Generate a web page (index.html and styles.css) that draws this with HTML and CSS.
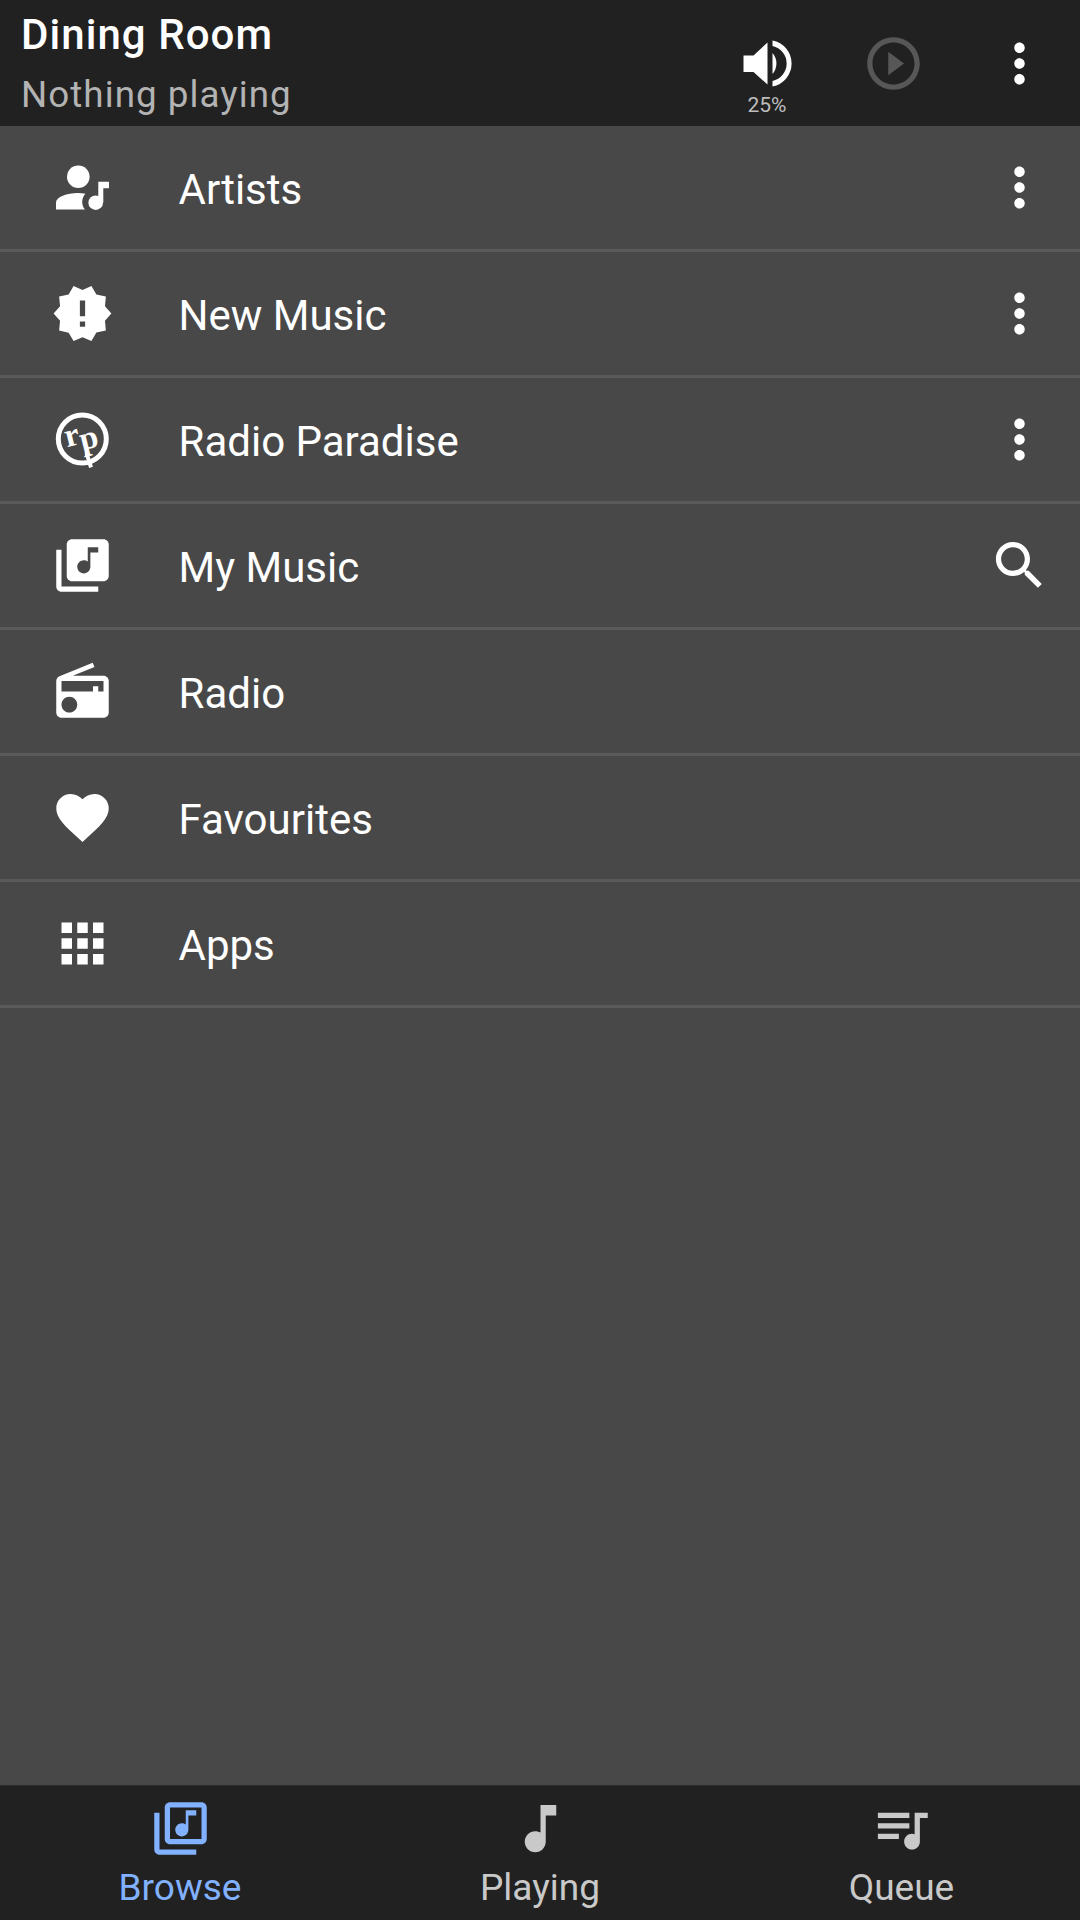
FILE: index.html
```html
<!DOCTYPE html>
<html lang="en">
<head>
    <meta charset="utf-8">
    <title>Dining Room</title>
    <link rel="stylesheet" href="styles.css">
</head>
<body>
    <header class="toolbar">
        <div class="now">
            <div class="now-title">Dining Room</div>
            <div class="now-sub">Nothing playing</div>
        </div>
        <div class="actions">
            <div class="volume">
                <svg class="icon" viewBox="0 0 63 63"><path d="M7.5 23.5H17.5L31.5 10.5V52.5L17.5 40H7.5Z"/><path d="M36.5 21A16 16 0 0 1 36.5 42Z"/><path d="M36.5 8.5A23.4 23.4 0 0 1 36.5 54.5V49A17.9 17.9 0 0 0 36.5 14Z"/></svg>
                <span class="volume-pct">25%</span>
            </div>
            <svg class="icon icon-off" viewBox="0 0 24 24"><path d="M10 16.5l6-4.5-6-4.5v9zM12 2C6.48 2 2 6.48 2 12s4.48 10 10 10 10-4.48 10-10S17.52 2 12 2zm0 18c-4.41 0-8-3.59-8-8s3.59-8 8-8 8 3.59 8 8-3.59 8-8 8z"/></svg>
            <svg class="icon" viewBox="0 0 24 24"><path d="M12 8c1.1 0 2-.9 2-2s-.9-2-2-2-2 .9-2 2 .9 2 2 2zm0 2c-1.1 0-2 .9-2 2s.9 2 2 2 2-.9 2-2-.9-2-2-2zm0 6c-1.1 0-2 .9-2 2s.9 2 2 2 2-.9 2-2-.9-2-2-2z"/></svg>
        </div>
    </header>

    <main class="list">
        <div class="row">
            <svg class="icon" viewBox="0 0 63 63"><g transform="translate(0 1.5)"><circle cx="27.3" cy="19.2" r="11.3"/><path d="M5 52V45C5 39.500 16 35.500 27 35.500C29.500 35.500 32 35.700 34.500 36.200C30.500 40 30 47.500 34 52Z"/><circle cx="44.700" cy="45.200" r="7.300"/><path d="M47.300 45V24.200H58V30.800H52.300V45Z"/></g></svg>
            <span class="row-label">Artists</span>
            <svg class="icon" viewBox="0 0 24 24"><path d="M12 8c1.1 0 2-.9 2-2s-.9-2-2-2-2 .9-2 2 .9 2 2 2zm0 2c-1.1 0-2 .9-2 2s.9 2 2 2 2-.9 2-2-.9-2-2-2zm0 6c-1.1 0-2 .9-2 2s.9 2 2 2 2-.9 2-2-.9-2-2-2z"/></svg>
        </div>
        <div class="row">
            <svg class="icon" viewBox="0 0 24 24"><path d="M23 12l-2.440-2.780.34-3.680-3.610-.82-1.890-3.180L12 3 8.600 1.540 6.710 4.720l-3.610.81.34 3.680L1 12l2.440 2.780-.34 3.690 3.610.82 1.890 3.180L12 21l3.400 1.460 1.890-3.180 3.610-.82-.34-3.680L23 12zm-10 5h-2v-2h2v2zm0-4h-2V7h2v6z"/></svg>
            <span class="row-label">New Music</span>
            <svg class="icon" viewBox="0 0 24 24"><path d="M12 8c1.1 0 2-.9 2-2s-.9-2-2-2-2 .9-2 2 .9 2 2 2zm0 2c-1.1 0-2 .9-2 2s.9 2 2 2 2-.9 2-2-.9-2-2-2zm0 6c-1.1 0-2 .9-2 2s.9 2 2 2 2-.9 2-2-.9-2-2-2z"/></svg>
        </div>
        <div class="row">
            <svg class="icon" viewBox="0 0 63 63"><circle class="rp-ring" cx="31.300" cy="31" r="24"/><path class="rp-tail" d="M35.500 45L40 59.300"/><text class="rp-text" x="14" y="38" transform="rotate(-14 20 30)">r</text><text class="rp-text" x="29" y="40" transform="rotate(-14 40 32)">p</text></svg>
            <span class="row-label">Radio Paradise</span>
            <svg class="icon" viewBox="0 0 24 24"><path d="M12 8c1.1 0 2-.9 2-2s-.9-2-2-2-2 .9-2 2 .9 2 2 2zm0 2c-1.1 0-2 .9-2 2s.9 2 2 2 2-.9 2-2-.9-2-2-2zm0 6c-1.1 0-2 .9-2 2s.9 2 2 2 2-.9 2-2-.9-2-2-2z"/></svg>
        </div>
        <div class="row">
            <svg class="icon" viewBox="0 0 24 24"><path d="M20 2H8c-1.100 0-2 .9-2 2v12c0 1.100.9 2 2 2h12c1.100 0 2-.9 2-2V4c0-1.100-.9-2-2-2zm-2 5h-3v5.500c0 1.380-1.120 2.500-2.500 2.500S10 13.880 10 12.500s1.120-2.500 2.500-2.500c.57 0 1.080.19 1.500.51V5h4v2zM4 6H2v14c0 1.100.9 2 2 2h14v-2H4V6z"/></svg>
            <span class="row-label">My Music</span>
            <svg class="icon" viewBox="0 0 24 24"><path d="M15.500 14h-.79l-.28-.27C15.410 12.590 16 11.110 16 9.500 16 5.910 13.090 3 9.500 3S3 5.910 3 9.500 5.910 16 9.500 16c1.610 0 3.090-.59 4.230-1.570l.27.28v.79l5 4.990L20.490 19l-4.990-5zm-6 0C7.010 14 5 11.990 5 9.500S7.010 5 9.500 5 14 7.010 14 9.500 11.990 14 9.500 14z"/></svg>
        </div>
        <div class="row">
            <svg class="icon" viewBox="0 0 24 24"><path d="M3.240 6.150C2.510 6.430 2 7.170 2 8v12c0 1.100.89 2 2 2h16c1.110 0 2-.9 2-2V8c0-1.110-.89-2-2-2H8.300l8.260-3.340L15.880 1 3.240 6.150zM7 20c-1.660 0-3-1.340-3-3s1.340-3 3-3 3 1.340 3 3-1.340 3-3 3zm13-8h-2v-2h-2v2H4V8h16v4z"/></svg>
            <span class="row-label">Radio</span>
        </div>
        <div class="row">
            <svg class="icon" viewBox="0 0 24 24"><path d="M12 21.350l-1.450-1.320C5.400 15.360 2 12.280 2 8.500 2 5.420 4.420 3 7.500 3c1.740 0 3.410.81 4.500 2.090C13.090 3.810 14.760 3 16.500 3 19.580 3 22 5.420 22 8.500c0 3.780-3.400 6.860-8.550 11.540L12 21.350z"/></svg>
            <span class="row-label">Favourites</span>
        </div>
        <div class="row">
            <svg class="icon" viewBox="0 0 24 24"><path d="M4 8h4V4H4v4zm6 12h4v-4h-4v4zm-6 0h4v-4H4v4zm0-6h4v-4H4v4zm6 0h4v-4h-4v4zm6-10v4h4V4h-4zm-6 4h4V4h-4v4zm6 6h4v-4h-4v4zm0 6h4v-4h-4v4z"/></svg>
            <span class="row-label">Apps</span>
        </div>
    </main>

    <nav class="tabs">
        <div class="tab tab-active">
            <svg class="icon" viewBox="0 0 24 24"><path d="M20 2H8c-1.100 0-2 .9-2 2v12c0 1.100.9 2 2 2h12c1.100 0 2-.9 2-2V4c0-1.100-.9-2-2-2zm0 14H8V4h12v12zm-7.500-1c1.380 0 2.500-1.120 2.500-2.500V7h3V5h-4v5.510c-.42-.32-.93-.51-1.500-.51-1.380 0-2.500 1.120-2.500 2.500s1.120 2.500 2.500 2.500zM4 6H2v14c0 1.100.9 2 2 2h14v-2H4V6z"/></svg>
            <span class="tab-label">Browse</span>
        </div>
        <div class="tab">
            <svg class="icon" viewBox="0 0 24 24"><path d="M12 3v10.550c-.59-.34-1.270-.55-2-.55-2.210 0-4 1.790-4 4s1.790 4 4 4 4-1.790 4-4V7h4V3h-6z"/></svg>
            <span class="tab-label">Playing</span>
        </div>
        <div class="tab tab-last">
            <svg class="icon" viewBox="0 0 24 24"><path d="M15 6H3v2h12V6zm0 4H3v2h12v-2zM3 16h8v-2H3v2zM17 6v8.180c-.31-.11-.65-.18-1-.18-1.660 0-3 1.340-3 3s1.340 3 3 3 3-1.340 3-3V8h3V6h-5z"/></svg>
            <span class="tab-label">Queue</span>
        </div>
    </nav>
</body>
</html>
```

FILE: styles.css
```css
* {
    box-sizing: border-box;
}

body {
    margin: 0;
    height: 1920px;
    display: flex;
    flex-direction: column;
    background: #484848;
    color: #fff;
    font-family: Roboto, "Noto Sans", sans-serif;
}

.icon {
    width: 63px;
    height: 63px;
    flex: none;
    display: block;
    fill: currentColor;
}

/* top bar */
.toolbar {
    height: 126px;
    flex: none;
    display: flex;
    align-items: center;
    justify-content: space-between;
    padding: 0 29.5px 0 21px;
    background: #212121;
}

.now-title {
    font-size: 42px;
    line-height: 54px;
    font-weight: 500;
    letter-spacing: 1.05px;
}

.now-sub {
    margin-top: 10px;
    font-size: 36.750px;
    line-height: 46px;
    letter-spacing: 1.05px;
    color: #b3b3b3;
}

.actions {
    display: flex;
    gap: 63px;
}

.volume {
    position: relative;
}

.volume-pct {
    position: absolute;
    left: 0;
    right: 0;
    top: 60px;
    text-align: center;
    font-size: 21px;
    line-height: 26px;
    color: #bdbdbd;
}

.icon-off {
    color: #575757;
}

/* browse list */
.list {
    flex: 1;
}

.row {
    height: 126px;
    display: flex;
    align-items: center;
    gap: 64.500px;
    padding: 0 29.5px 0 51px;
    border-bottom: 3px solid #5a5a5a;
}

.row-label {
    flex: 1;
    padding-top: 3px;
    font-size: 42px;
}

/* rp logo */
.rp-ring {
    fill: none;
    stroke: currentColor;
    stroke-width: 5px;
}

.rp-tail {
    fill: none;
    stroke: currentColor;
    stroke-width: 4px;
}

.rp-text {
    font-family: "Liberation Serif", serif;
    font-weight: 700;
    font-size: 33px;
}

/* bottom tabs */
.tabs {
    height: 135px;
    flex: none;
    display: grid;
    grid-template-columns: repeat(3, 1fr);
    padding-top: 10.500px;
    background: #212121;
    border-top: 1px solid #2c2c2c;
    color: #c9c9c9;
}

.tab {
    display: flex;
    flex-direction: column;
    align-items: center;
}

.tab-last {
    padding-left: 3px;
}

.tab-active {
    color: #82b1ff;
}

.tab-label {
    margin-top: 6px;
    font-size: 37px;
    line-height: 44px;
}
```
